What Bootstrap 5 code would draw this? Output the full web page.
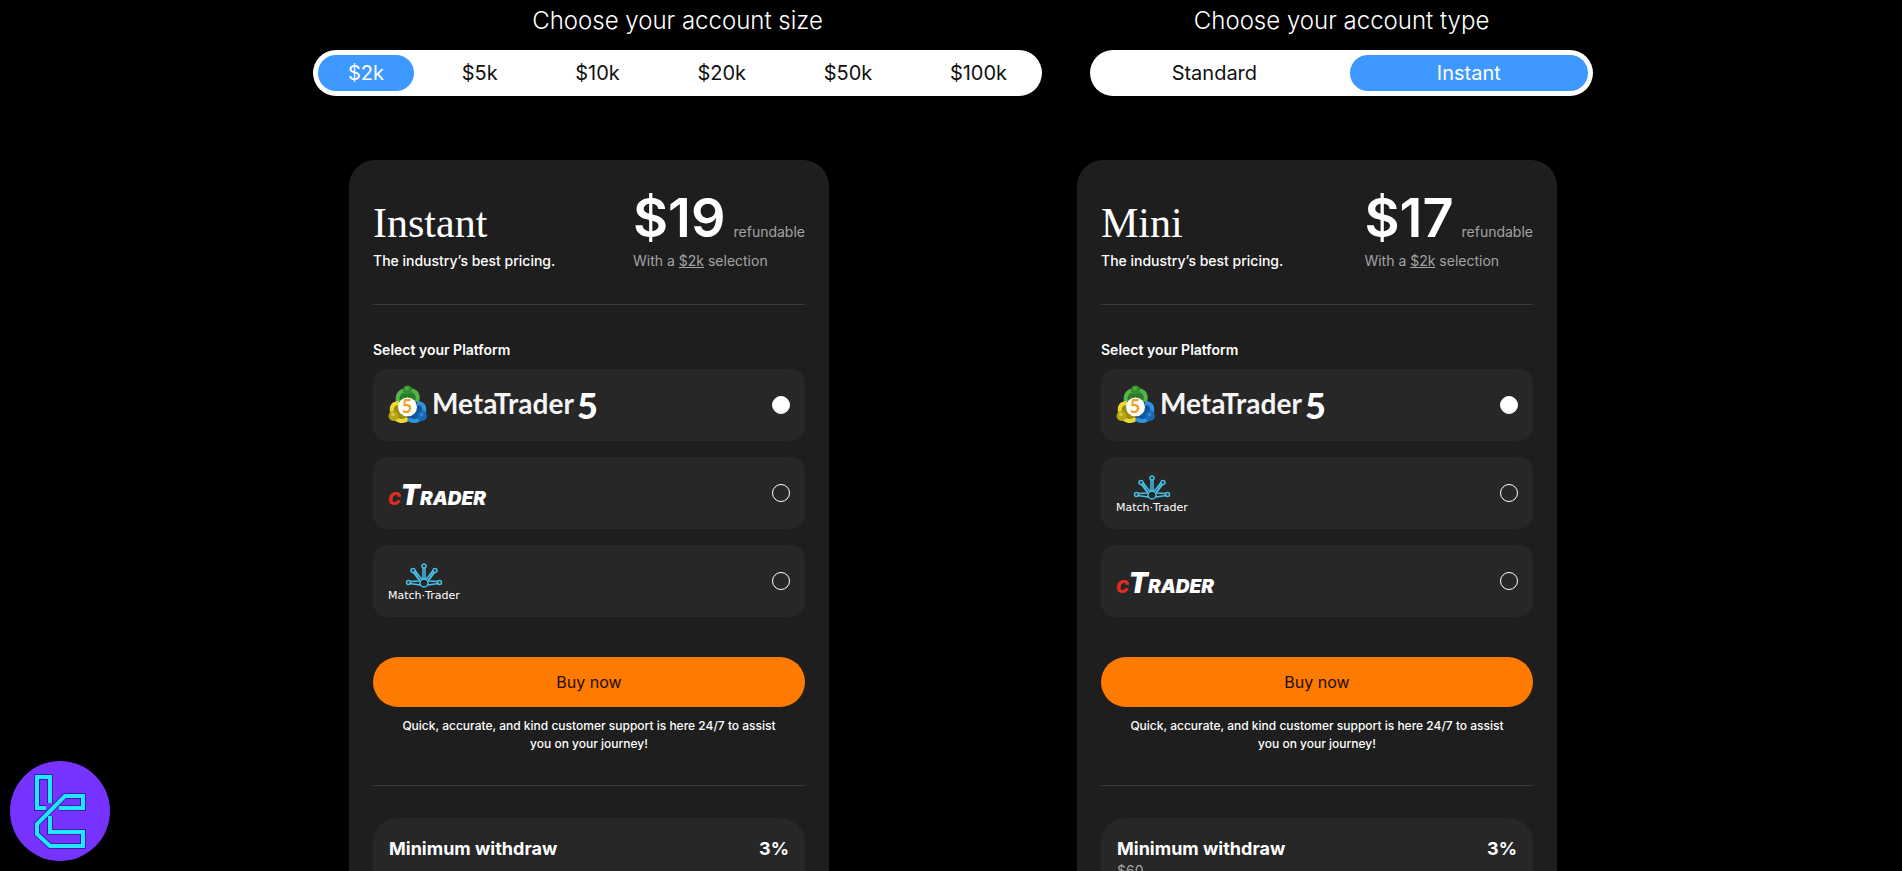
<!DOCTYPE html>
<html lang="en">
<head>
<meta charset="utf-8">
<meta name="viewport" content="width=device-width, initial-scale=1">
<title>Choose your account</title>
<link href="https://cdn.jsdelivr.net/npm/bootstrap@5.3.0/dist/css/bootstrap.min.css" rel="stylesheet">
<style>
  :root {
    --accent: #3d98ff;
    --panel: #1e1e1e;
    --panel-inner: #272727;
    --line: #3a3a3a;
    --muted: #a3a3a3;
  }
  html { overflow: hidden; height: 100%; }
  body {
    height: 100%;
    overflow: hidden;
    background: #000;
    color: #fff;
    font-family: Inter, "Liberation Sans", sans-serif;
    font-size: 14px;
    line-height: 20px;
  }
  .chooser { max-width: 1280px; display: grid; grid-template-columns: 29fr 20fr; column-gap: 48px; padding-top: 5px; }
  .chooser legend { font-size: 24px; line-height: 32px; font-weight: 300; margin-bottom: 13px; }
  .pill-bar { background: #fff; border-radius: 23px; padding: 5px; gap: 16px; }
  .pill-bar label { color: #111; font-size: 20px; line-height: 36px; padding: 0 30px; border-radius: 18px; cursor: pointer; text-align: center; }
  .pill-bar .btn-check:checked + label { background: var(--accent); color: #fff; }
  .plans { max-width: 1456px; margin-top: 64px; }
  .plan { max-width: 480px; background: var(--panel); border-radius: 26px; padding: 24px 24px 0; }
  .plan-head { height: 121px; padding-top: 6px; border-bottom: 1px solid var(--line); }
  .plan-head h2 { font-family: "Liberation Serif", serif; font-size: 42px; font-weight: 400; line-height: 56px; padding-top: 5px; margin-bottom: 0; }
  .price { font-size: 54px; line-height: 56px; font-weight: 600; }
  .price-line { height: 61px; }
  .soft { color: var(--muted); }
  .plan fieldset { margin-top: 35px; }
  .plan legend { font-size: 14px; line-height: 20px; font-weight: 600; margin-bottom: 9px; float: none; }
  .platform { height: 72px; border-radius: 14px; background: var(--panel-inner); padding: 0 15px; cursor: pointer; }
  .platform svg { overflow: visible; }
  .platform .form-check-input { width: 18px; height: 18px; background: transparent; border: 1px solid #fff; box-shadow: none; }
  .platform .form-check-input:checked { background: #fff; }
  .buy { height: 50px; border-radius: 25px; background: #ff7a00; color: #1c0d00; font-size: 16px; margin-top: 40px; }
  .buy:hover { background: #ff8c24; color: #1c0d00; }
  .support { font-size: 12px; line-height: 18px; font-weight: 500; padding: 0 20px; margin: 10px 0 0; }
  .plan hr { margin: 32px 0; color: var(--line); opacity: 1; }
  .terms { min-height: 160px; background: var(--panel-inner); border-radius: 24px 24px 0 0; padding: 19px 16px; }
  .terms dt, .terms .rate { font-size: 18px; line-height: 24px; font-weight: 700; }
  .help { left: 10px; bottom: 10px; width: 100px; height: 100px; }
</style>
</head>
<body class="ps-1">

<form class="chooser mx-auto">
  <fieldset>
    <legend class="text-center">Choose your account size</legend>
    <div class="pill-bar d-flex justify-content-between">
      <input class="btn-check" type="radio" name="size" id="s2" checked><label for="s2">$2k</label>
      <input class="btn-check" type="radio" name="size" id="s5"><label for="s5">$5k</label>
      <input class="btn-check" type="radio" name="size" id="s10"><label for="s10">$10k</label>
      <input class="btn-check" type="radio" name="size" id="s20"><label for="s20">$20k</label>
      <input class="btn-check" type="radio" name="size" id="s50"><label for="s50">$50k</label>
      <input class="btn-check" type="radio" name="size" id="s100"><label for="s100">$100k</label>
    </div>
  </fieldset>
  <fieldset>
    <legend class="text-center">Choose your account type</legend>
    <div class="pill-bar d-flex">
      <input class="btn-check" type="radio" name="type" id="t1"><label class="col" for="t1">Standard</label>
      <input class="btn-check" type="radio" name="type" id="t2" checked><label class="col" for="t2">Instant</label>
    </div>
  </fieldset>
</form>

<main class="plans mx-auto">
  <div class="row g-0">

    <div class="col-6">
      <section class="plan mx-auto">
        <header class="plan-head d-flex justify-content-between">
          <div>
            <h2>Instant</h2>
            <p class="mb-0 fw-medium">The industry’s best pricing.</p>
          </div>
          <div>
            <div class="price-line d-flex align-items-baseline gap-2"><span class="price">$19</span><span class="soft">refundable</span></div>
            <p class="mb-0 soft">With a <u>$2k</u> selection</p>
          </div>
        </header>
        <form>
          <fieldset>
            <legend>Select your Platform</legend>
            <div class="d-flex flex-column gap-3">
              <label class="platform d-flex align-items-center justify-content-between">
                <svg width="214" height="44" viewBox="0 0 214 44" role="img" aria-label="MetaTrader 5">
                  <g stroke-width="4">
                    <path d="M10 19C8 9 15 7 20 7s12 2 9 12" fill="#2c7a2c" stroke="#55b545"/>
                    <path d="M11 20C2 20 3 28 5 32c3 7 10 7 15 4" fill="#9a8c14" stroke="#ecd935"/>
                    <path d="M29 20c9 0 8 8 6 12-3 7-10 7-15 4" fill="#15559a" stroke="#2f93e0"/>
                  </g>
                  <circle cx="19.500" cy="7" r="4.500" fill="#2f8f2f"/><circle cx="19" cy="5.500" r="2" fill="#4fa83e"/>
                  <circle cx="5.500" cy="33" r="5" fill="#b7a614"/><circle cx="5" cy="31.500" r="2" fill="#d6c636"/>
                  <circle cx="34" cy="33" r="5" fill="#1768b4"/><circle cx="33.500" cy="31.500" r="2" fill="#2f83cc"/>
                  <circle cx="19.500" cy="24" r="9.500" fill="#fff"/>
                  <text x="19" y="30" text-anchor="middle" font-family="Lato, sans-serif" font-weight="700" font-size="18" fill="#f0a01c">5</text>
                  <text x="44" y="31" font-family="Lato, sans-serif" font-weight="700" font-size="28" fill="#f4f4f4">MetaTrader</text>
                  <text x="189" y="36" font-family="Lato, sans-serif" font-weight="900" font-size="36" fill="#fff">5</text>
                </svg>
                <input class="form-check-input m-0" type="radio" name="p1" checked>
              </label>
              <label class="platform d-flex align-items-center justify-content-between">
                <svg width="98" height="32" viewBox="0 0 98 32" role="img" aria-label="cTrader">
                  <text x="0" y="28" font-family="Inter, sans-serif" font-weight="900" font-style="italic" font-size="19" fill="#fff"><tspan font-size="17" fill="#e02b20">C</tspan><tspan font-size="28">T</tspan>RADER</text>
                </svg>
                <input class="form-check-input m-0" type="radio" name="p1">
              </label>
              <label class="platform d-flex align-items-center justify-content-between">
                <svg width="78" height="40" viewBox="0 0 78 40" role="img" aria-label="Match-Trader">
                  <g fill="none" stroke="#45c1ea" stroke-width="1.500">
                    <path d="M35 18.500V7M37 18.500V7M32 20L25 11M34 18.500L27 9.500M40 20L47 11M38 18.500L45 9.500M32 20L22 20.500M32.500 24L21.500 22.500M40 20L50 20.500M39.500 24L50.500 22.500M32 20L27 12M40 20L45 12"/>
                    <circle cx="36" cy="22" r="4"/><circle cx="36" cy="5" r="2"/><circle cx="25" cy="9.500" r="2"/><circle cx="47" cy="9.500" r="2"/><circle cx="20.500" cy="21.500" r="2"/><circle cx="51.500" cy="21.500" r="2"/>
                  </g>
                  <text x="0" y="38" font-family="'DejaVu Sans', sans-serif" font-size="11" fill="#fff">Match·Trader</text>
                </svg>
                <input class="form-check-input m-0" type="radio" name="p1">
              </label>
            </div>
          </fieldset>
          <button type="button" class="buy btn border-0 w-100">Buy now</button>
        </form>
        <p class="support text-center">Quick, accurate, and kind customer support is here 24/7 to assist you on your journey!</p>
        <hr>
        <dl class="terms mb-0">
          <div class="d-flex justify-content-between"><dt>Minimum withdraw</dt><dd class="rate mb-0">3%</dd></div>
        </dl>
      </section>
    </div>

    <div class="col-6">
      <section class="plan mx-auto">
        <header class="plan-head d-flex justify-content-between">
          <div>
            <h2>Mini</h2>
            <p class="mb-0 fw-medium">The industry’s best pricing.</p>
          </div>
          <div>
            <div class="price-line d-flex align-items-baseline gap-2"><span class="price">$17</span><span class="soft">refundable</span></div>
            <p class="mb-0 soft">With a <u>$2k</u> selection</p>
          </div>
        </header>
        <form>
          <fieldset>
            <legend>Select your Platform</legend>
            <div class="d-flex flex-column gap-3">
              <label class="platform d-flex align-items-center justify-content-between">
                <svg width="214" height="44" viewBox="0 0 214 44" role="img" aria-label="MetaTrader 5">
                  <g stroke-width="4">
                    <path d="M10 19C8 9 15 7 20 7s12 2 9 12" fill="#2c7a2c" stroke="#55b545"/>
                    <path d="M11 20C2 20 3 28 5 32c3 7 10 7 15 4" fill="#9a8c14" stroke="#ecd935"/>
                    <path d="M29 20c9 0 8 8 6 12-3 7-10 7-15 4" fill="#15559a" stroke="#2f93e0"/>
                  </g>
                  <circle cx="19.500" cy="7" r="4.500" fill="#2f8f2f"/><circle cx="19" cy="5.500" r="2" fill="#4fa83e"/>
                  <circle cx="5.500" cy="33" r="5" fill="#b7a614"/><circle cx="5" cy="31.500" r="2" fill="#d6c636"/>
                  <circle cx="34" cy="33" r="5" fill="#1768b4"/><circle cx="33.500" cy="31.500" r="2" fill="#2f83cc"/>
                  <circle cx="19.500" cy="24" r="9.500" fill="#fff"/>
                  <text x="19" y="30" text-anchor="middle" font-family="Lato, sans-serif" font-weight="700" font-size="18" fill="#f0a01c">5</text>
                  <text x="44" y="31" font-family="Lato, sans-serif" font-weight="700" font-size="28" fill="#f4f4f4">MetaTrader</text>
                  <text x="189" y="36" font-family="Lato, sans-serif" font-weight="900" font-size="36" fill="#fff">5</text>
                </svg>
                <input class="form-check-input m-0" type="radio" name="p2" checked>
              </label>
              <label class="platform d-flex align-items-center justify-content-between">
                <svg width="78" height="40" viewBox="0 0 78 40" role="img" aria-label="Match-Trader">
                  <g fill="none" stroke="#45c1ea" stroke-width="1.500">
                    <path d="M35 18.500V7M37 18.500V7M32 20L25 11M34 18.500L27 9.500M40 20L47 11M38 18.500L45 9.500M32 20L22 20.500M32.500 24L21.500 22.500M40 20L50 20.500M39.500 24L50.500 22.500M32 20L27 12M40 20L45 12"/>
                    <circle cx="36" cy="22" r="4"/><circle cx="36" cy="5" r="2"/><circle cx="25" cy="9.500" r="2"/><circle cx="47" cy="9.500" r="2"/><circle cx="20.500" cy="21.500" r="2"/><circle cx="51.500" cy="21.500" r="2"/>
                  </g>
                  <text x="0" y="38" font-family="'DejaVu Sans', sans-serif" font-size="11" fill="#fff">Match·Trader</text>
                </svg>
                <input class="form-check-input m-0" type="radio" name="p2">
              </label>
              <label class="platform d-flex align-items-center justify-content-between">
                <svg width="98" height="32" viewBox="0 0 98 32" role="img" aria-label="cTrader">
                  <text x="0" y="28" font-family="Inter, sans-serif" font-weight="900" font-style="italic" font-size="19" fill="#fff"><tspan font-size="17" fill="#e02b20">C</tspan><tspan font-size="28">T</tspan>RADER</text>
                </svg>
                <input class="form-check-input m-0" type="radio" name="p2">
              </label>
            </div>
          </fieldset>
          <button type="button" class="buy btn border-0 w-100">Buy now</button>
        </form>
        <p class="support text-center">Quick, accurate, and kind customer support is here 24/7 to assist you on your journey!</p>
        <hr>
        <dl class="terms mb-0">
          <div class="d-flex justify-content-between"><dt>Minimum withdraw</dt><dd class="rate mb-0">3%</dd></div>
          <dd class="soft mb-0">$60</dd>
        </dl>
      </section>
    </div>
  </div>
</main>

<button type="button" class="help btn p-0 border-0 position-fixed" aria-label="Open help">
  <svg width="100" height="100" viewBox="0 0 100 100">
    <circle cx="50" cy="50" r="50" fill="#7633ff"/>
    <g fill="none" stroke="#3a1fa8" stroke-width="6"><path d="M36 47H27V16H40V42"/><path d="M49 47H73V35H55L27 63V73L40 85H73V71H40V55"/></g>
    <g fill="none" stroke="#22e6ff" stroke-width="4"><path d="M36 47H27V16H40V42"/><path d="M49 47H73V35H55L27 63V73L40 85H73V71H40V55"/></g>
  </svg>
</button>

<script src="https://cdn.jsdelivr.net/npm/bootstrap@5.3.0/dist/js/bootstrap.bundle.min.js"></script>
</body>
</html>
